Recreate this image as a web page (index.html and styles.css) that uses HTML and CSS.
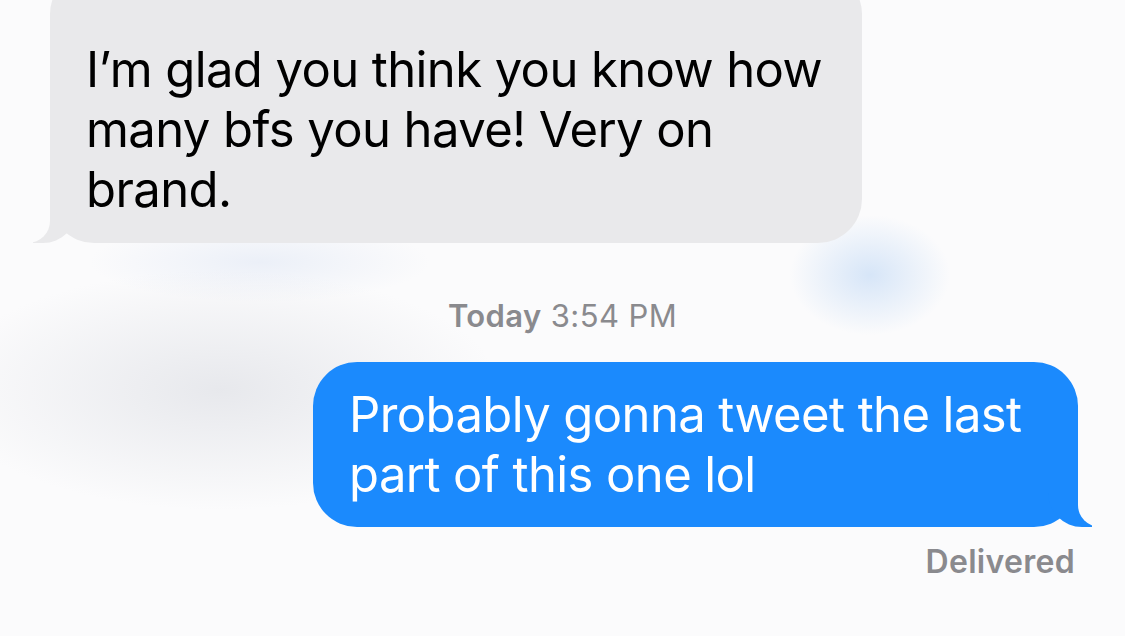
FILE: index.html
```html
<!DOCTYPE html>
<html lang="en">
<head>
    <meta charset="UTF-8">
    <title>Messages</title>
    <link rel="stylesheet" href="styles.css">
</head>
<body>
    <div class="thread">
        <div class="bubble received">
            I’m glad you think you know how many bfs you have! Very on brand.
        </div>
        <div class="stamp"><strong>Today</strong> 3:54 PM</div>
        <div class="bubble sent">
            Probably gonna tweet the last part of this one lol
        </div>
        <div class="status">Delivered</div>
    </div>
</body>
</html>
```

FILE: styles.css
```css
html, body { margin: 0; height: 100%; overflow: hidden; }
body {
    font-family: Inter, "Noto Sans", sans-serif;
    background:
        radial-gradient(ellipse 80px 60px at 870px 275px, rgba(190, 215, 245, 0.6), transparent),
        radial-gradient(ellipse 280px 120px at 220px 390px, rgba(218, 220, 226, 0.6), transparent),
        radial-gradient(ellipse 170px 40px at 260px 262px, rgba(225, 232, 245, 0.6), transparent),
        #fbfbfc;
}
.thread { display: flex; flex-direction: column; }

.bubble {
    position: relative;
    font-size: 49px;
    line-height: 60px;
    letter-spacing: -0.6px;
    padding: 0 36px;
    border-radius: 44px;
    box-sizing: border-box;
}
.received {
    align-self: flex-start;
    margin: -30px 0 0 50px;
    width: 812px;
    padding-top: 70px;
    padding-bottom: 23px;
    background: #e9e9eb;
    color: #000;
}
.sent {
    align-self: flex-end;
    margin: 29px 47px 0 0;
    width: 765px;
    padding-top: 23px;
    padding-bottom: 22px;
    background: #1b8afd;
    color: #fff;
}

/* tails */
.bubble::before, .bubble::after { content: ""; position: absolute; bottom: 0; }
.received::before {
    left: -17px; width: 44px; height: 44px;
    background: #e9e9eb;
    border-bottom-right-radius: 34px;
}
.received::after {
    left: -26px; width: 26px; height: 46px;
    background: #fbfbfc;
    border-bottom-right-radius: 22px;
}
.sent::before {
    right: -14px; width: 44px; height: 44px;
    background: #1b8afd;
    border-bottom-left-radius: 34px;
}
.sent::after {
    right: -26px; width: 26px; height: 46px;
    background: #fbfbfc;
    border-bottom-left-radius: 22px;
}

.stamp {
    align-self: center;
    margin-top: 56px;
    font-size: 31px;
    line-height: 34px;
    color: #8a8a8e;
    letter-spacing: 0.4px;
}
.stamp strong { font-weight: 600; }
.status {
    align-self: flex-end;
    margin: 18px 50px 0 0;
    font-size: 32px;
    line-height: 34px;
    font-weight: 600;
    color: #8a8a8e;
    letter-spacing: 0.3px;
}
```
